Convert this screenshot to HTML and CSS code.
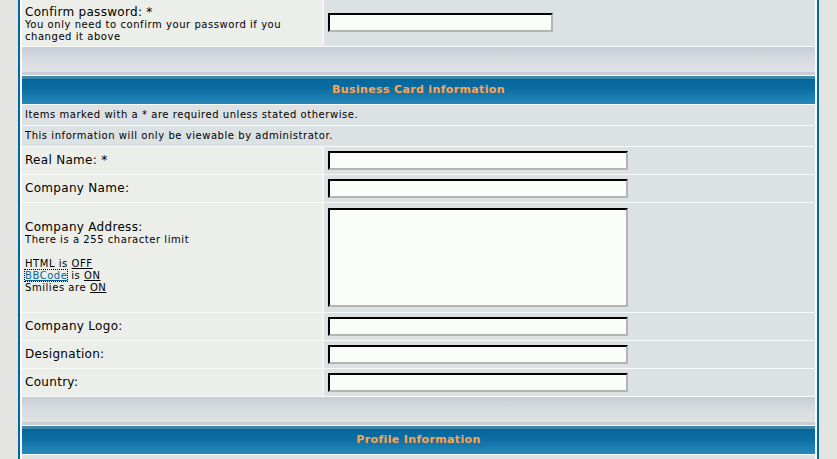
FILE: index.html
```html
<!DOCTYPE html>
<html>
<head>
<meta charset="utf-8">
<title>Profile</title>
<link rel="stylesheet" href="styles.css">
</head>
<body>
<div class="page">
<table class="forumline">
  <tr class="first">
    <td class="row1 label"><span class="gen">Confirm password: *</span><span class="gensmall">You only need to confirm your password if you changed it above</span></td>
    <td class="row2 field"><input type="password" class="post short"></td>
  </tr>
  <tr><td class="catBottom" colspan="2"></td></tr>
  <tr><th class="thHead" colspan="2">Business Card information</th></tr>
  <tr><td class="row2 info" colspan="2"><span class="gensmall">Items marked with a * are required unless stated otherwise.</span></td></tr>
  <tr><td class="row2 info" colspan="2"><span class="gensmall">This information will only be viewable by administrator.</span></td></tr>
  <tr>
    <td class="row1 label"><span class="gen">Real Name: *</span></td>
    <td class="row2 field"><input type="text" class="post"></td>
  </tr>
  <tr>
    <td class="row1 label"><span class="gen">Company Name:</span></td>
    <td class="row2 field"><input type="text" class="post"></td>
  </tr>
  <tr>
    <td class="row1 label"><span class="gen">Company Address:</span><span class="gensmall">There is a 255 character limit<br><br>HTML is <u>OFF</u><br><a href="#" class="bblink">BBCode</a> is <u>ON</u><br>Smilies are <u>ON</u></span></td>
    <td class="row2 field"><textarea class="post area"></textarea></td>
  </tr>
  <tr>
    <td class="row1 label"><span class="gen">Company Logo:</span></td>
    <td class="row2 field"><input type="text" class="post"></td>
  </tr>
  <tr>
    <td class="row1 label"><span class="gen">Designation:</span></td>
    <td class="row2 field"><input type="text" class="post"></td>
  </tr>
  <tr>
    <td class="row1 label"><span class="gen">Country:</span></td>
    <td class="row2 field"><input type="text" class="post"></td>
  </tr>
  <tr><td class="catBottom" colspan="2"></td></tr>
  <tr><th class="thHead" colspan="2">Profile Information</th></tr>
  <tr><td class="row2 info empty" colspan="2"></td></tr>
</table>
</div>
</body>
</html>
```

FILE: styles.css
```css
html, body {
  margin: 0;
  padding: 0;
  overflow: hidden;
}

body {
  background: #e4e5e2;
  font-family: "DejaVu Sans", Verdana, sans-serif;
  color: #000;
}

.page {
  padding: 0 18px;
}

.forumline {
  width: 100%;
  table-layout: fixed;
  border: 2px solid #03669c;
  background: #f8faf7;
  border-spacing: 1px;
  padding: 1px;
  margin-top: -8px;
}

td, th {
  padding: 4px 3px;
  vertical-align: middle;
}

.row1 {
  background: #eceeea;
}

.row2 {
  background: #dce1e4;
}

.label {
  width: 301px;
  box-sizing: border-box;
}

.field {
  padding: 4px;
}

.first .label {
  padding-top: 10px;
  padding-bottom: 3px;
}

.first .field {
  padding: 6px 4px 4px;
}

.gen {
  display: block;
  font-size: 12px;
  line-height: 13px;
  letter-spacing: 0.3px;
}

.gensmall {
  display: block;
  font-size: 10px;
  line-height: 12px;
  letter-spacing: 0.55px;
}

.info {
  padding: 4px 3px;
}

.empty {
  height: 12px;
}

.post {
  display: block;
  box-sizing: border-box;
  width: 300px;
  height: 19px;
  margin: 0;
  padding: 0 2px;
  border: 2px solid;
  border-color: #000 #b4b4b4 #b4b4b4 #000;
  background: #fbfdf9;
  font-family: "DejaVu Sans", Verdana, sans-serif;
  font-size: 11px;
}

.short {
  width: 225px;
}

.area {
  height: 99px;
  margin: 1px 0;
  resize: none;
}

.bblink {
  color: #006699;
  text-decoration: underline;
  outline: 1px dotted #000;
}

.catBottom {
  height: 28px;
  padding: 0;
  background: linear-gradient(#c7ced6 0px, #d3d9de 10px, #dde1e4 20px, #e0e3e5 25px, #c8ced1 25px, #c8ced1 28px);
}

.thHead {
  height: 28px;
  padding: 0;
  line-height: 28px;
  background: linear-gradient(#3f87aa 0px, #3f87aa 3px, #04669a 3px, #0b6ca1 12px, #2789bb 28px);
  color: #ffa34f;
  font-size: 11px;
  font-weight: bold;
  letter-spacing: 0.35px;
  text-align: center;
}
```
